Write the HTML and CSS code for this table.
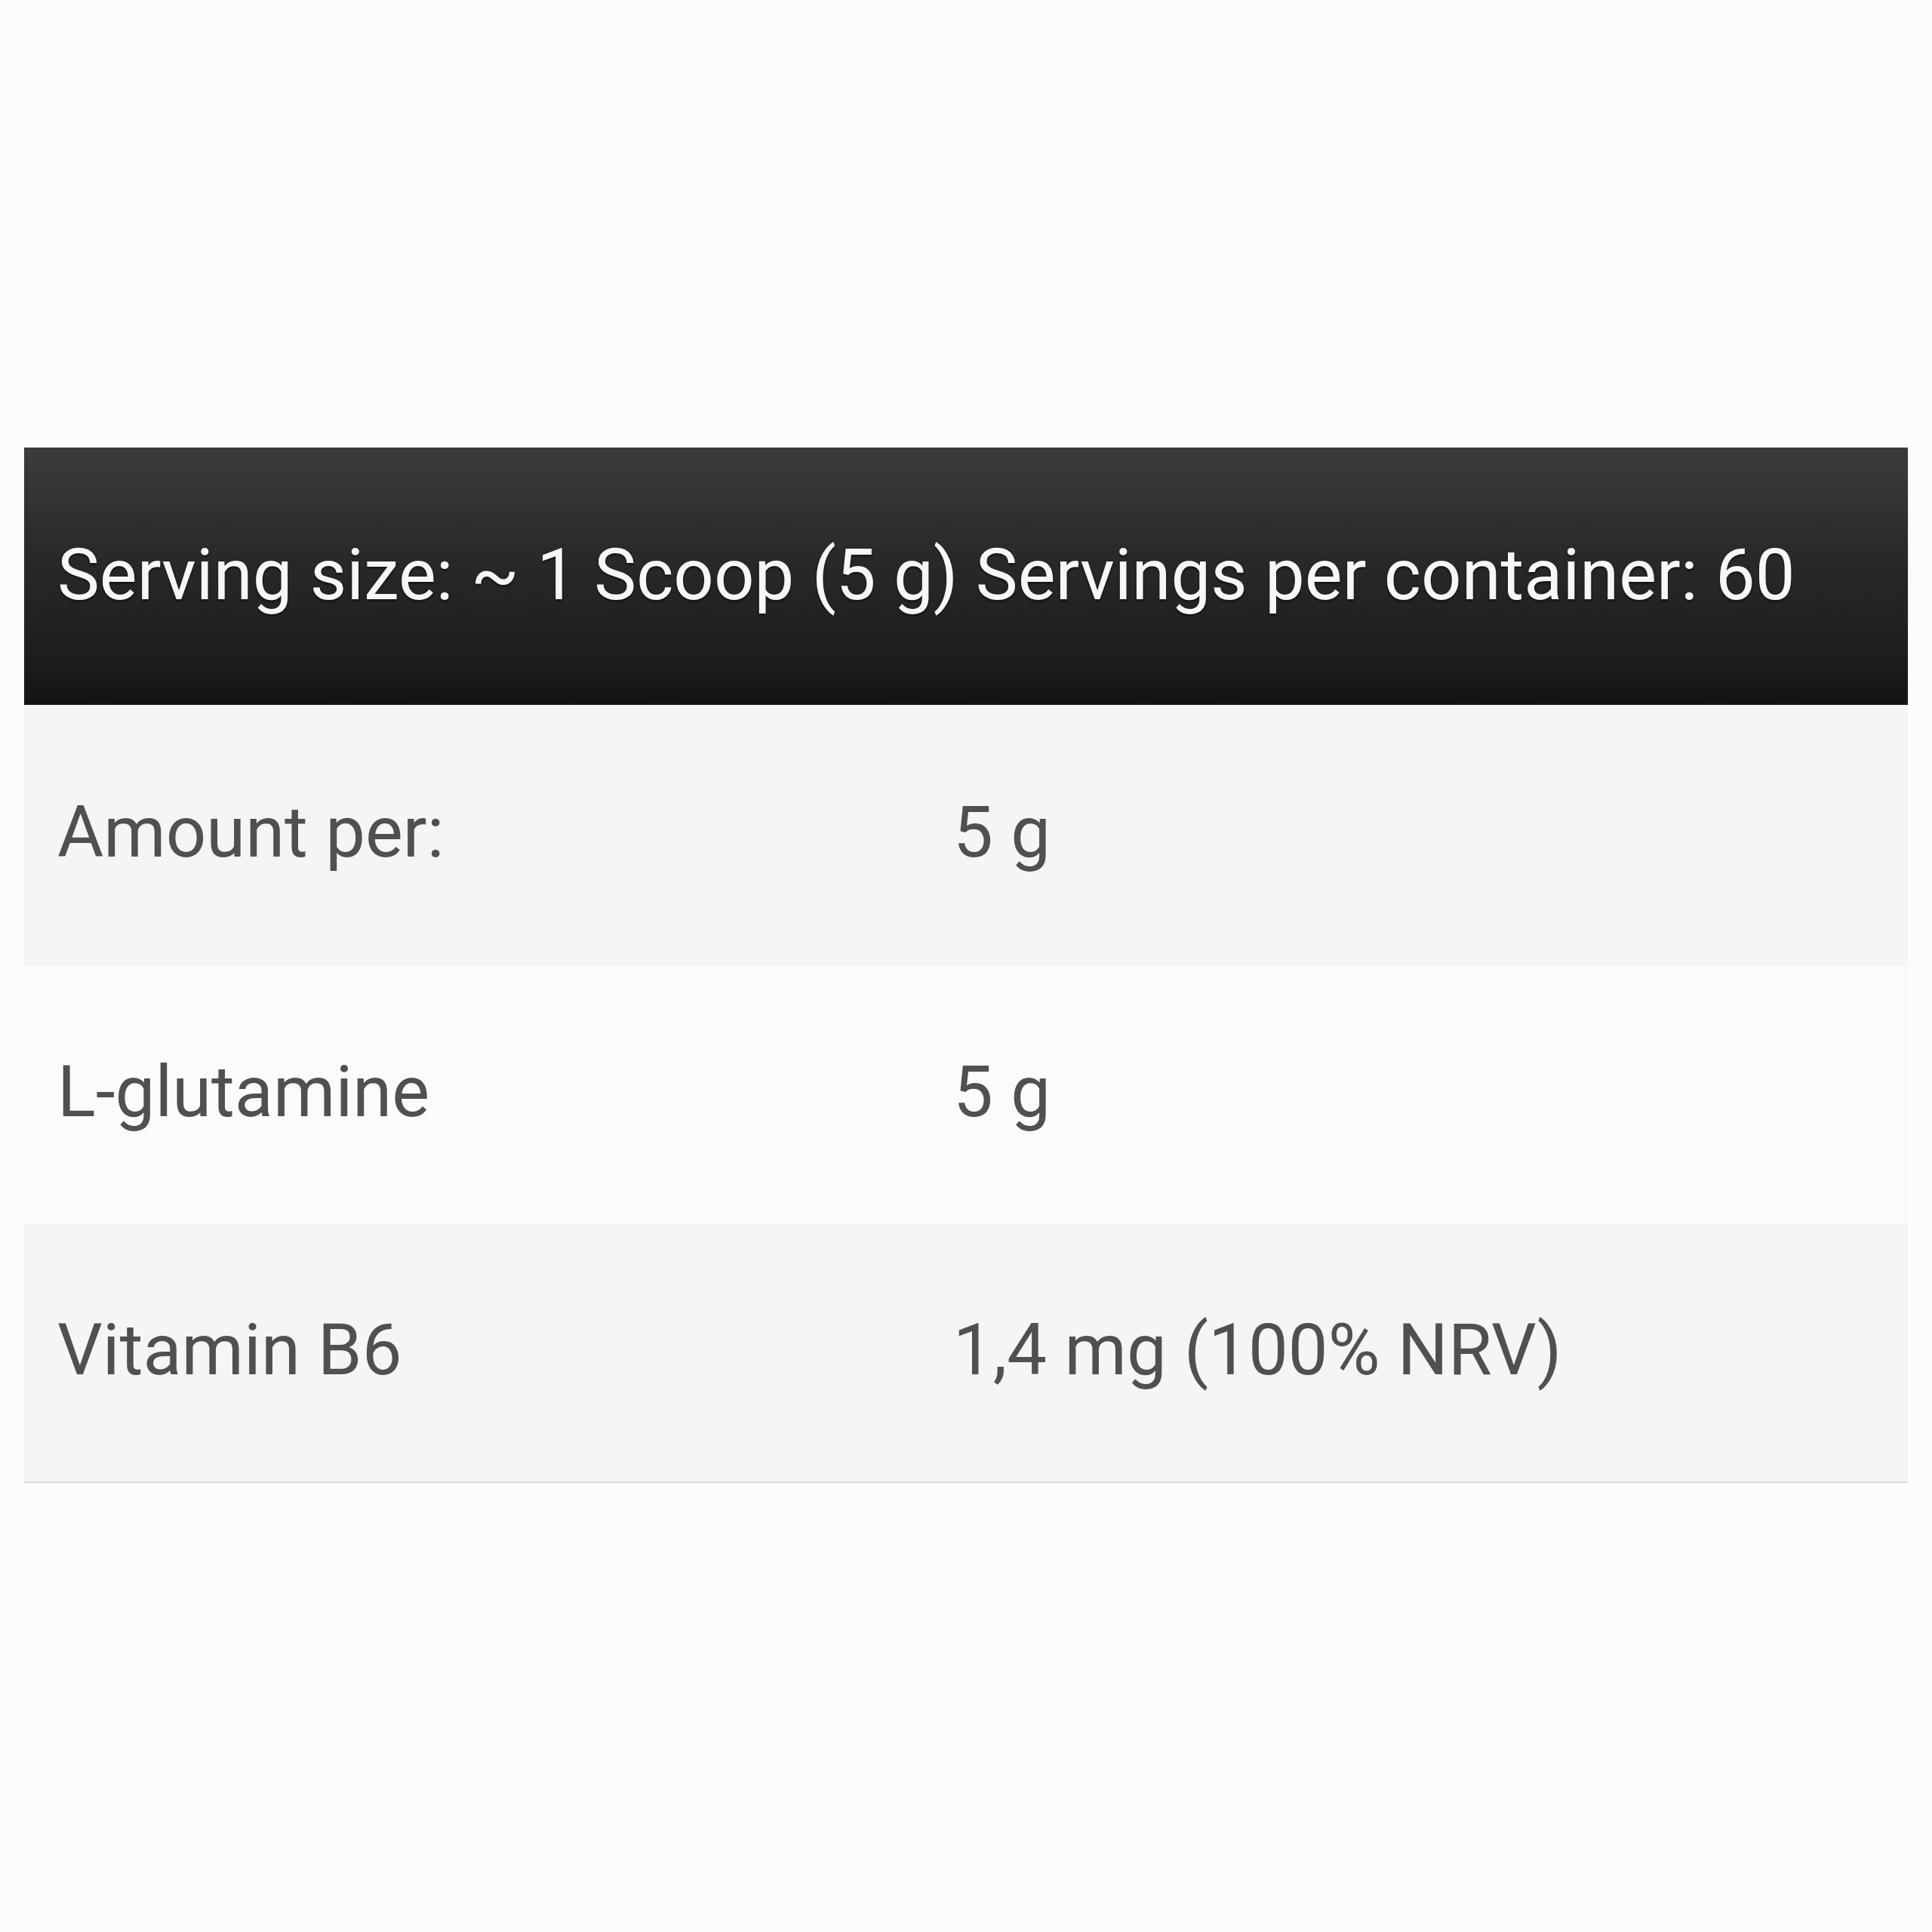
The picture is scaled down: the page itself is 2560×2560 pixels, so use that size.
FILE: index.html
```html
<!DOCTYPE html>
<html lang="en">
<head>
<meta charset="utf-8">
<title>Nutrition facts</title>
<link rel="stylesheet" href="styles.css">
</head>
<body>
<div class="page">
  <div class="table">
    <div class="header">Serving size: ~ 1 Scoop (5 g) Servings per container: 60</div>
    <div class="row row-gray row-first">
      <div class="cell">Amount per:</div>
      <div class="cell">5 g</div>
    </div>
    <div class="row row-light">
      <div class="cell">L-glutamine</div>
      <div class="cell">5 g</div>
    </div>
    <div class="row row-gray row-last">
      <div class="cell">Vitamin B6</div>
      <div class="cell">1,4 mg (100% NRV)</div>
    </div>
  </div>
</div>
</body>
</html>
```

FILE: styles.css
```css
html, body {
  margin: 0;
  padding: 0;
  background: #fcfcfc;
}

.page {
  width: 2560px;
  height: 2560px;
  box-sizing: border-box;
  padding: 593px 32px 0 32px;
  font-family: Roboto, "Liberation Sans", sans-serif;
}

.table {
  width: 2496px;
}

.header {
  height: 341px;
  box-sizing: border-box;
  display: flex;
  align-items: center;
  padding: 0 0 4px 44px;
  background: linear-gradient(to bottom, #3c3c3c 0%, #2a2a2a 40%, #1c1c1c 85%, #131313 100%);
  color: #f7f7f7;
  font-size: 94px;
  white-space: nowrap;
  text-shadow: 0 2px 3px rgba(0, 0, 0, 0.6);
  box-shadow: 0 2px 2px rgba(0, 0, 0, 0.15);
}

.row {
  display: grid;
  grid-template-columns: 1187px 1fr;
  align-items: center;
  height: 342px;
  box-sizing: border-box;
  padding: 0 0 8px 44px;
  color: #505052;
  font-size: 94px;
  white-space: nowrap;
}

.row-first {
  height: 346px;
}

.row-gray {
  background: #f4f5f6;
}

.row-light {
  background: #fafbfc;
}

.row-last {
  height: 343px;
  border-bottom: 2px solid #d9dbdc;
}
```
